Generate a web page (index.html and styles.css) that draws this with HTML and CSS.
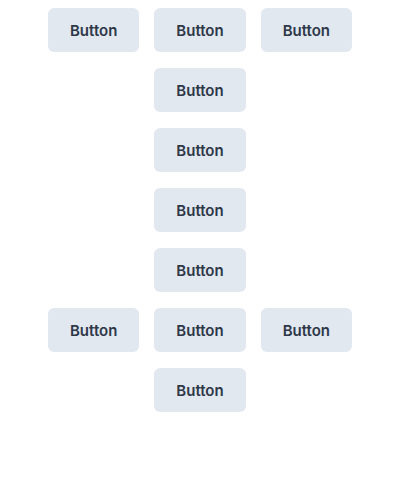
FILE: index.html
```html
<!DOCTYPE html>
<html lang="en">
<head>
<meta charset="utf-8">
<title>Buttons</title>
<link rel="stylesheet" href="styles.css">
</head>
<body>
<div class="grid">
  <button class="btn c1">Button</button>
  <button class="btn c2">Button</button>
  <button class="btn c3">Button</button>
  <button class="btn c2">Button</button>
  <button class="btn c2">Button</button>
  <button class="btn c2">Button</button>
  <button class="btn c2">Button</button>
  <button class="btn c1">Button</button>
  <button class="btn c2">Button</button>
  <button class="btn c3">Button</button>
  <button class="btn c2">Button</button>
</div>
</body>
</html>
```
FILE: styles.css
```css
html, body {
  margin: 0;
  padding: 0;
  background: #ffffff;
}
body {
  padding-top: 8px;
  font-family: Inter, "Liberation Sans", sans-serif;
}
.grid {
  display: grid;
  grid-template-columns: repeat(3, 91.333px);
  column-gap: 15px;
  row-gap: 16px;
  justify-content: center;
}
.btn {
  height: 44px;
  border: none;
  border-radius: 6px;
  background: #e2e8f0;
  color: #2d3748;
  font-family: Inter, "Liberation Sans", sans-serif;
  font-size: 15px;
  font-weight: 600;
  padding: 0;
  cursor: pointer;
}
.c1 { grid-column: 1; }
.c2 { grid-column: 2; }
.c3 { grid-column: 3; }
```
